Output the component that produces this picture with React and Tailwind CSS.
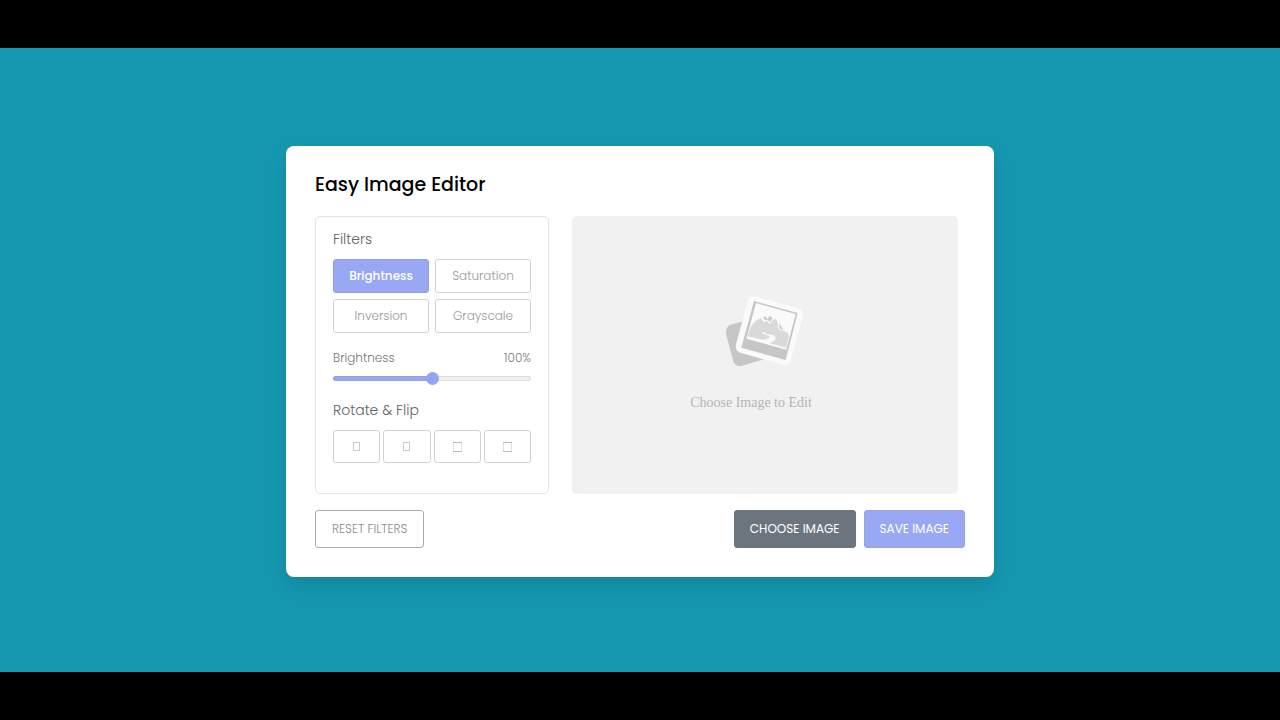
import { useState } from "react";

const FILTERS = ["Brightness", "Saturation", "Inversion", "Grayscale"];

const ACTIONS = [
  { label: "Rotate left", wide: false },
  { label: "Rotate right", wide: false },
  { label: "Flip horizontally", wide: true },
  { label: "Flip vertically", wide: true },
];

function BoxGlyph({ wide }) {
  return wide ? (
    <svg width="9" height="10" viewBox="0 0 9 10" fill="none" aria-hidden="true">
      <path d="M.5 .5V9.500M8.500 .5V9.500" stroke="#dedede" />
      <path d="M0 .5H9M0 9.500H9" stroke="#bcbcbc" />
    </svg>
  ) : (
    <svg width="7" height="9" viewBox="0 0 7 9" fill="none" aria-hidden="true">
      <rect x=".5" y=".5" width="6" height="8" stroke="#cacaca" />
    </svg>
  );
}

function PhotosIcon() {
  return (
    <svg width="100" height="90" viewBox="0 0 300 270" aria-hidden="true">
      <path
        d="M50 118L90 108L150 222L82 242Q62 246 55 230L34 150Q29 126 50 118Z"
        fill="#c6c6c6"
      />
      <path
        d="M120 34L250 70Q267 76 264 92L228 224Q221 243 202 239L76 203Q59 196 63 178L98 50Q104 31 120 34Z"
        fill="#fafafa"
      />
      <path d="M117 48L248 84L212 225L79 188Z" fill="#c6c6c6" />
      <path d="M123 54L242 87L214 194L94 161Z" fill="#fafafa" />
      <path
        d="M121 108L140 97L184 103L202 136L218 143L222 154L213 188L164 175L178 167Q187 157 176 151L154 146Q146 140 136 139L106 127Z"
        fill="#dadada"
      />
      <path d="M107 125L148 137Q136 145 148 148L160 151Q168 155 160 160L146 165L98 154Z" fill="#dadada" />
      <path
        d="M137 99L146 112L155 107L163 117L174 104L186 101L178 93L158 88L146 90Z"
        fill="#fafafa"
      />
      <path d="M144 96L150 94L157 101L165 93L173 99L164 110L156 103L150 106Z" fill="#c9c9c9" />
      <path d="M187 103L190 132L202 137L208 132Z" fill="#fafafa" />
      <path d="M192 113L195 131L205 134Z" fill="#c9c9c9" />
    </svg>
  );
}

export default function App() {
  const [active, setActive] = useState("Brightness");
  const [value, setValue] = useState(100);
  const percent = value / 2;

  return (
    <div className="flex min-h-screen flex-col bg-black py-12 font-[Poppins,Inter,sans-serif]">
      <main className="flex grow items-center justify-center bg-[#1697b1] px-4 pt-[3px]">
        <section className="w-full max-w-[708px] rounded-lg bg-white px-[29px] pt-6 pb-[29px] shadow-[0_8px_18px_rgba(0,0,0,0.12)]">
          <h1 className="text-[19px] leading-[30px] font-medium text-black">Easy Image Editor</h1>

          <div className="mt-4 flex flex-wrap gap-[23px] pr-[7px] sm:flex-nowrap">
            <div className="w-[234px] shrink-0 rounded-[5px] border border-[#e4e4e4] px-[17px] pt-3 pb-[30px]">
              <h2 className="text-[14px] leading-5 font-light text-[#626262]">Filters</h2>
              <div className="mt-2.5 grid grid-cols-2 gap-x-1.5 gap-y-1.5">
                {FILTERS.map((name) => (
                  <button
                    key={name}
                    type="button"
                    onClick={() => setActive(name)}
                    className={
                      name === active
                        ? "h-[34px] rounded-[3px] border border-[#8f9fee] bg-[#99a8f5] text-[12px] font-medium text-white"
                        : "h-[34px] rounded-[3px] border border-[#d2d2d2] bg-white text-[12px] font-light text-[#999]"
                    }
                  >
                    {name}
                  </button>
                ))}
              </div>

              <div className="mt-4 flex justify-between text-[12px] leading-[18px] font-light text-[#777]">
                <label htmlFor="amount">{active}</label>
                <output htmlFor="amount">{value}%</output>
              </div>
              <input
                id="amount"
                type="range"
                min="0"
                max="200"
                value={value}
                onChange={(e) => setValue(Number(e.target.value))}
                style={{ "--fill": `${percent}%` }}
                className="mt-[5px] block h-[13px] w-full appearance-none bg-transparent [&::-webkit-slider-runnable-track]:h-[5px] [&::-webkit-slider-runnable-track]:rounded-full [&::-webkit-slider-runnable-track]:bg-[linear-gradient(to_right,#99a8f0_var(--fill),#efefef_var(--fill))] [&::-webkit-slider-runnable-track]:shadow-[inset_0_0_0_1px_rgba(120,120,120,0.15)] [&::-webkit-slider-thumb]:-mt-1 [&::-webkit-slider-thumb]:size-[13px] [&::-webkit-slider-thumb]:appearance-none [&::-webkit-slider-thumb]:rounded-full [&::-webkit-slider-thumb]:bg-[#94a4f4]"
              />

              <h2 className="mt-[15px] text-[14px] leading-5 font-light text-[#626262]">Rotate &amp; Flip</h2>
              <div className="mt-2.5 grid grid-cols-4 gap-[3px]">
                {ACTIONS.map(({ label, wide }) => (
                  <button
                    key={label}
                    type="button"
                    aria-label={label}
                    className="flex h-[33px] items-center justify-center rounded-[3px] border border-[#d2d2d2] bg-white"
                  >
                    <BoxGlyph wide={wide} />
                  </button>
                ))}
              </div>
            </div>

            <div className="flex grow flex-col items-center justify-center rounded-[5px] bg-[#f1f1f1] pb-3">
              <PhotosIcon />
              <p className="mt-[18px] mr-7 font-['Liberation_Serif',serif] text-[14px] leading-5 text-[#b5b5b5]">
                Choose Image to Edit
              </p>
            </div>
          </div>

          <div className="mt-4 flex flex-wrap items-center justify-between gap-2">
            <button
              type="button"
              className="h-[38px] rounded-[3px] border border-[#aaa] bg-white px-4 text-[12px] font-light text-[#8c8c8c]"
            >
              RESET FILTERS
            </button>
            <div className="flex gap-2">
              <button
                type="button"
                className="h-[38px] rounded-[3px] border border-[#6c757d] bg-[#6c757d] px-[15px] text-[12px] text-white"
              >
                CHOOSE IMAGE
              </button>
              <button
                type="button"
                className="h-[38px] rounded-[3px] border border-[#9aa3e0] bg-[#99a8f5] px-[15px] text-[12px] text-white"
              >
                SAVE IMAGE
              </button>
            </div>
          </div>
        </section>
      </main>
    </div>
  );
}
